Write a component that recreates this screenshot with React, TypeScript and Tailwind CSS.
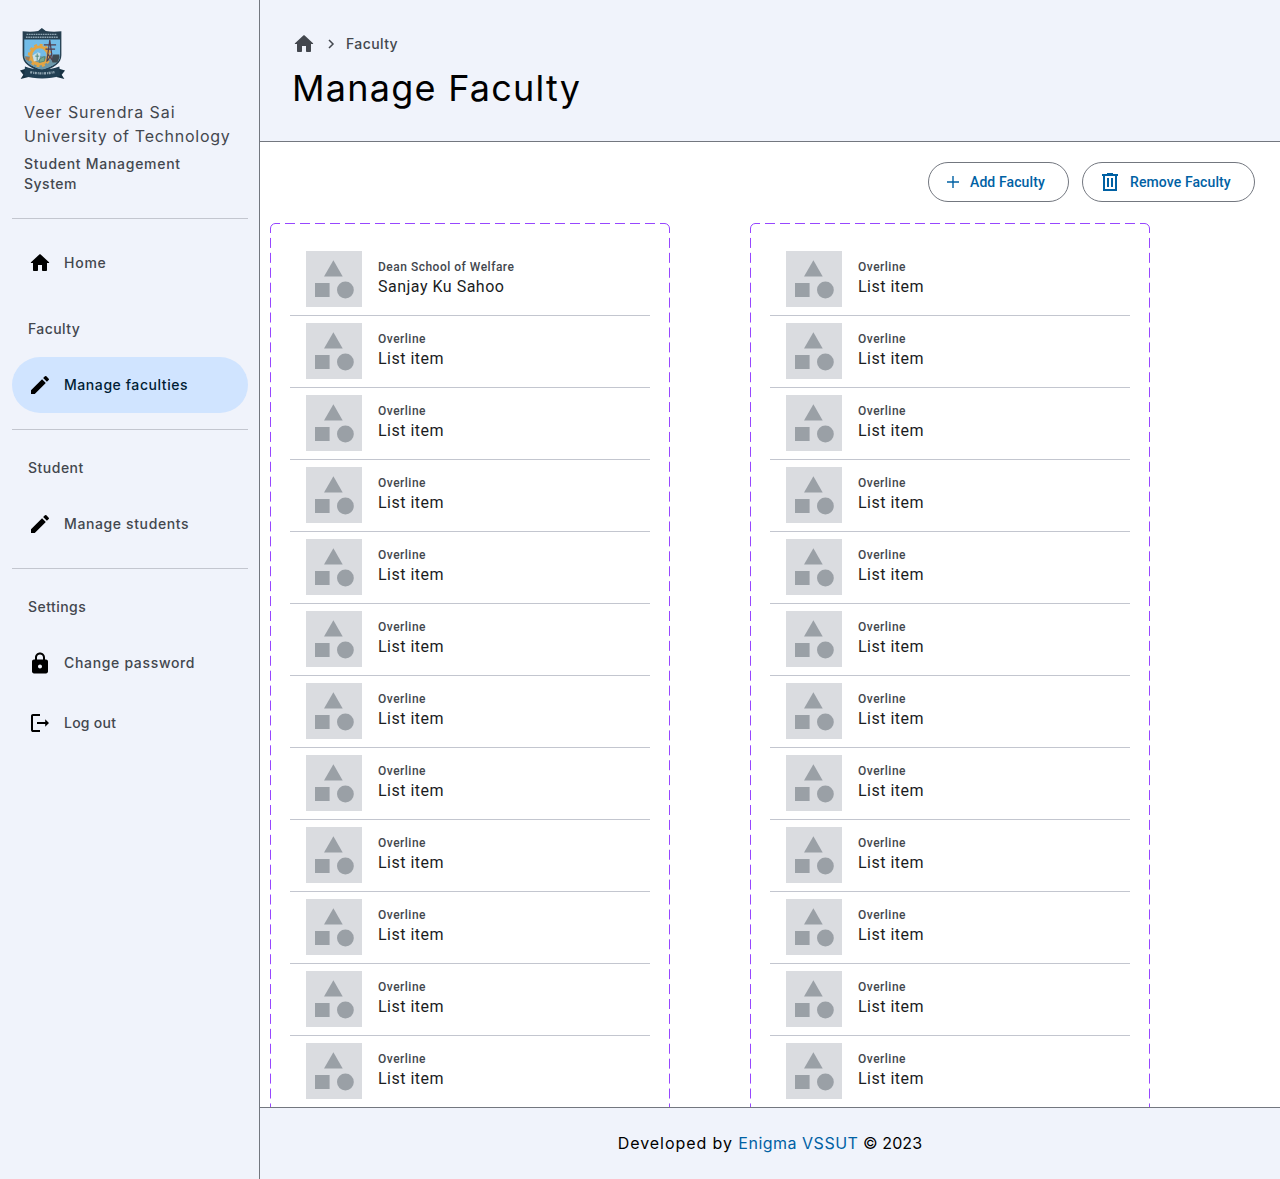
import type { ReactNode } from "react";

const HOME =
  "M10 19v-5h4v5c0 .55.45 1 1 1h3c.55 0 1-.45 1-1v-7h1.7c.46 0 .68-.57.33-.87L12.67 3.6c-.38-.34-.96-.34-1.34 0l-8.36 7.53c-.34.3-.13.87.33.87H5v7c0 .55.45 1 1 1h3c.55 0 1-.45 1-1z";
const EDIT =
  "M3 17.25V21h3.75L17.81 9.94l-3.75-3.75L3 17.25zM20.71 7.04a1 1 0 0 0 0-1.41l-2.34-2.34a1 1 0 0 0-1.41 0l-1.83 1.83 3.75 3.75 1.83-1.83z";
const LOCK =
  "M18 8.5h-1V6.4C17 3.8 14.76 1.5 12 1.5S7 3.8 7 6.4v2.1H6c-1.1 0-2 .8-2 1.9v10.2c0 1.1.9 1.9 2 1.9h12c1.1 0 2-.8 2-1.9V10.4c0-1.1-.9-1.9-2-1.9zm-6 8.9c-1.1 0-2-.9-2-2s.9-2 2-2 2 .9 2 2-.9 2-2 2zm3-8.9H9V6.4c0-1.6 1.34-2.9 3-2.9s3 1.3 3 2.9v2.1z";
const LOGOUT =
  "M5 21q-.825 0-1.412-.587T3 19V5q0-.825.588-1.413Q4.175 3 5 3h7v2H5v14h7v2zM17.2 15.7V13H9v-2h8.2V8.3L21 12z";

function Icon({ d, className = "" }: { d: string; className?: string }) {
  return (
    <svg viewBox="0 0 24 24" className={`size-6 shrink-0 fill-current ${className}`}>
      <path d={d} />
    </svg>
  );
}

function Crest() {
  return (
    <svg viewBox="30 20 140 160" className="h-[53px] w-[47px]">
      <path d="M98 23l12 9c14 3 30 3 47 1v72c0 24-22 38-59 51-37-13-58-27-58-51V33c17 2 33 2 47-1z" fill="#263f50" />
      <path d="M45 58h108v48c0 19-17 31-55 43-38-12-53-24-53-43z" fill="#72bce8" />
      <path d="M45 108h108c-2 18-18 29-55 41-36-12-51-23-53-41z" fill="#6c97a8" />
      <path d="M52 42h92M50 51h97" stroke="#8fa6b3" strokeWidth="4" strokeDasharray="5 2" />
      <circle cx="91" cy="106" r="26" fill="none" stroke="#e3a544" strokeWidth="9" />
      <circle cx="91" cy="106" r="32" fill="none" stroke="#e3a544" strokeWidth="7" strokeDasharray="9 7.7" />
      <path d="M70 106l16-10 8 4-3 19-17 5z" fill="#c9dfe6" />
      <path d="M78 108h12M84 100v20M92 116l14-7v14l-16 4z" stroke="#568c7b" strokeWidth="3" fill="#79a890" />
      <path d="M122 59l-9 66M122 59l9 66M104 74h37M109 87h29M115 100l16 22M129 100l-14 22" fill="none" stroke="#513e4f" strokeWidth="3.5" />
      <path d="M132 103h19v9l-6 15h-15z" fill="#3e4b51" />
      <path d="M48 109l14 2-3 12-9-5z" fill="#a27b51" />
      <path d="M32 151l20-6 6 26-24 6 8-13zM168 151l-20-6-6 26 24 6-8-13z" fill="#173142" />
      <path d="M47 139c28 12 75 12 104 0l2 28c-30 11-78 11-108 0z" fill="#213f53" />
      <path d="M63 156q35 8 73 0" fill="none" stroke="#93a8b4" strokeWidth="7" strokeDasharray="6 3 3 2" />
    </svg>
  );
}

function NavItem({ icon, active, children, track }: { icon: string; active?: boolean; children: ReactNode; track: string }) {
  return (
    <a
      className={`flex h-14 items-center gap-3 rounded-full pl-4 text-sm font-medium ${
        active ? "bg-[#d0e4ff] text-[#001d34]" : "text-[#43474e]"
      }`}
    >
      <Icon d={icon} className="text-black" />
      <span className={track}>{children}</span>
    </a>
  );
}

function NavLabel({ children, track }: { children: ReactNode; track: string }) {
  return (
    <h2 className={`flex h-14 items-center pl-4 text-sm font-medium text-[#43474e] ${track}`}>{children}</h2>
  );
}

function Sidebar() {
  return (
    <aside className="flex w-[260px] shrink-0 flex-col border-r border-[#73777f] bg-[#f0f3fb] pl-3 pr-[11px] pt-[27px]">
      <div className="ml-[7px]">
        <Crest />
      </div>
      <div className="pl-3 pt-[20px] text-[#43474e]">
        <p className="whitespace-nowrap text-base leading-6">
          <span className="tracking-[0.9px]">Veer Surendra Sai</span>
          <br />
          <span className="tracking-[0.73px]">University of Technology</span>
        </p>
        <p className="mt-[6px] text-sm font-medium leading-5">
          <span className="tracking-[0.72px]">Student Management</span>
          <br />
          <span className="tracking-[0.5px]">System</span>
        </p>
      </div>
      <div className="mt-6 h-px bg-[#c3c6cf]" />
      <nav className="pt-4">
        <NavItem icon={HOME} track="tracking-[0.75px]">Home</NavItem>
        <div className="h-[10px]" />
        <NavLabel track="tracking-[0.42px]">Faculty</NavLabel>
        <NavItem icon={EDIT} active track="tracking-[0.57px]">Manage faculties</NavItem>
        <div className="mb-[10px] mt-4 h-px bg-[#c3c6cf]" />
        <NavLabel track="tracking-[0.5px]">Student</NavLabel>
        <NavItem icon={EDIT} track="tracking-[0.62px]">Manage students</NavItem>
        <div className="mb-[10px] mt-4 h-px bg-[#c3c6cf]" />
        <NavLabel track="tracking-[0.45px]">Settings</NavLabel>
        <NavItem icon={LOCK} track="tracking-[0.67px]">Change password</NavItem>
        <div className="h-1" />
        <NavItem icon={LOGOUT} track="tracking-[0.25px]">Log out</NavItem>
      </nav>
    </aside>
  );
}

function Thumbnail() {
  return (
    <svg viewBox="0 0 56 56" className="size-14 shrink-0 bg-[#dadce0] fill-[#9aa0a6]">
      <path d="M27.4 9.2l9.3 16.3H18z" />
      <path d="M9 32h14.6v14H9z" />
      <circle cx="39.4" cy="39" r="8.4" />
    </svg>
  );
}

type Entry = { overline: string; name: string };
const placeholder: Entry = { overline: "Overline", name: "List item" };
const left: Entry[] = [
  { overline: "Dean School of Welfare", name: "Sanjay Ku Sahoo" },
  ...Array.from({ length: 11 }, () => placeholder),
];
const right: Entry[] = Array.from({ length: 12 }, () => placeholder);

function FacultyList({ entries }: { entries: Entry[] }) {
  return (
    <section className="relative w-[400px] shrink-0 px-5 pt-[21px]">
      <svg className="pointer-events-none absolute inset-0 size-full fill-none stroke-[#9747ff]">
        <path d="M0.5 5.5a5 5 0 0 1 5-5M394.5 0.5a5 5 0 0 1 5 5" />
        <path d="M5 0.5H395" strokeDasharray="10 5" strokeDashoffset="5" />
        <path d="M0.5 5V900M399.5 5V900" strokeDasharray="10 4.923" strokeDashoffset="5" />
      </svg>
      <ul>
        {entries.map((entry, i) => (
          <li key={i} className="flex h-[72px] gap-4 border-b border-[#c3c6cf] px-4 pt-[7px] last:border-transparent">
            <Thumbnail />
            <div className="pt-2">
              <p className="text-xs font-medium leading-4 tracking-[0.5px] text-[#43474e]">{entry.overline}</p>
              <p className="text-base leading-6 tracking-[0.5px] text-[#1a1c1e]">{entry.name}</p>
            </div>
          </li>
        ))}
      </ul>
    </section>
  );
}

export default function App() {
  return (
    <div className="flex h-[1179px] w-[1280px] overflow-hidden bg-white font-['Inter',sans-serif]">
      <Sidebar />
      <div className="flex min-w-0 grow flex-col">
        <header className="h-[142px] shrink-0 border-b border-[#73777f] bg-[#f0f3fb] pl-8 pt-8">
          <div className="flex h-6 items-center text-sm font-medium text-[#43474e]">
            <Icon d={HOME} />
            <svg viewBox="0 0 8 10" className="ml-[11px] h-[10px] w-2 fill-none stroke-current" strokeWidth="1.5">
              <path d="M2 1l4 4-4 4" />
            </svg>
            <span className="ml-[11px] tracking-[0.4px]">Faculty</span>
          </div>
          <h1 className="mt-[10px] text-4xl leading-[44px] tracking-[1.25px] text-black">Manage Faculty</h1>
        </header>
        <main className="flex min-h-0 grow flex-col overflow-hidden font-['Roboto',sans-serif]">
          <div className="flex shrink-0 justify-end gap-[13px] pr-[25px] pt-5 text-sm font-medium tracking-[0.1px] text-[#0061a4]">
            <button className="flex h-10 w-[141px] items-center rounded-full border border-[#73777f] pl-[18px]">
              <svg viewBox="0 0 12 12" className="size-3 stroke-current" strokeWidth="1.4">
                <path d="M6 0v12M0 6h12" />
              </svg>
              <span className="ml-[11px]">Add Faculty</span>
            </button>
            <button className="flex h-10 w-[173px] items-center rounded-full border border-[#73777f] pl-[19px]">
              <svg viewBox="0 0 16 18" className="h-[18px] w-4 fill-none stroke-current" strokeWidth="2">
                <path d="M0 2h16M5 1h6M2 2v15h12V2M6 5v9M10 5v9" />
              </svg>
              <span className="ml-3">Remove Faculty</span>
            </button>
          </div>
          <div className="mt-[21px] flex min-h-0 grow gap-20 overflow-hidden pl-[10px]">
            <FacultyList entries={left} />
            <FacultyList entries={right} />
          </div>
        </main>
        <footer className="flex h-[72px] shrink-0 items-center justify-center border-t border-[#73777f] bg-[#f0f3fb] pb-0.5 text-base text-black">
          <p className="tracking-[0.5px]">
            <span className="tracking-[0.93px]">Developed by </span>
            <a className="text-[#0061a4]">Enigma VSSUT</a>
            <span className="tracking-[0.1px]"> © 2023</span>
          </p>
        </footer>
      </div>
    </div>
  );
}
